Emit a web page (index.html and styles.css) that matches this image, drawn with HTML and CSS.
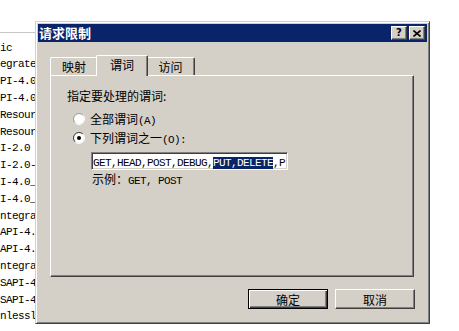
FILE: index.html
```html
<!DOCTYPE html>
<html lang="zh-CN">
  <head>
    <meta charset="UTF-8" />
    <title>请求限制</title>
    <link rel="stylesheet" href="styles.css">
  </head>
  <body>
    <div class="list">
      <div class="list-head"></div>
      <div class="rows">
        <div class="row">ic</div>
        <div class="row">egrate</div>
        <div class="row">PI-4.0</div>
        <div class="row">PI-4.0</div>
        <div class="row">Resour</div>
        <div class="row">Resour</div>
        <div class="row">I-2.0</div>
        <div class="row">I-2.0-</div>
        <div class="row">I-4.0_</div>
        <div class="row">I-4.0_</div>
        <div class="row">ntegrat</div>
        <div class="row">API-4.</div>
        <div class="row">API-4.</div>
        <div class="row">ntegra</div>
        <div class="row">SAPI-4</div>
        <div class="row">SAPI-4</div>
        <div class="row">nlessl</div>
      </div>
    </div>

    <div class="dialog">
      <div class="titlebar">
        <span class="title">请求限制</span>
        <div class="caption-buttons">
          <button class="cap-btn help">?</button>
          <button class="cap-btn">
            <svg width="8" height="7" viewBox="0 0 8 7">
              <path d="M0.5 0.5 L7.5 6.5 M7.5 0.5 L0.5 6.5" stroke="#000" stroke-width="1.6" fill="none" />
            </svg>
          </button>
        </div>
      </div>

      <div class="tabs">
        <div class="tab">映射</div>
        <div class="tab active">谓词</div>
        <div class="tab">访问</div>
      </div>

      <div class="panel">
        <div class="label">指定要处理的谓词:</div>

        <div class="radio-row">
          <svg class="radio" width="12" height="12" viewBox="0 0 12 12">
            <circle cx="6" cy="6" r="5" fill="#fff" />
            <path d="M9.9 2.1 A5.5 5.5 0 0 0 2.1 9.9" stroke="#a0a0a0" fill="none" />
            <path d="M2.1 9.9 A5.5 5.5 0 0 0 9.9 2.1" stroke="#fff" fill="none" />
          </svg>
          <span>全部谓词<span class="ascii">(A)</span></span>
        </div>

        <div class="radio-row">
          <svg class="radio" width="12" height="12" viewBox="0 0 12 12">
            <circle cx="6" cy="6" r="5" fill="#fff" />
            <path d="M9.9 2.1 A5.5 5.5 0 0 0 2.1 9.9" stroke="#404040" fill="none" />
            <path d="M2.1 9.9 A5.5 5.5 0 0 0 9.9 2.1" stroke="#fff" fill="none" />
            <circle cx="6" cy="6" r="2" fill="#000" />
          </svg>
          <span>下列谓词之一<span class="ascii">(O):</span></span>
        </div>

        <div class="field">
          <span class="ascii">GET,HEAD,POST,DEBUG,<span class="selected">PUT,DELETE</span>,P</span>
        </div>

        <div class="hint">示例：<span class="ascii">GET, POST</span></div>
      </div>

      <div class="actions">
        <button class="btn default">确定</button>
        <button class="btn">取消</button>
      </div>
    </div>
  </body>
</html>
```

FILE: styles.css
```css
* {
  margin: 0;
  padding: 0;
  box-sizing: border-box;
}

body {
  width: 459px;
  height: 331px;
  overflow: hidden;
  position: relative;
  background: #fff;
  color: #000;
  font-family: "Noto Sans CJK SC", sans-serif;
  font-size: 12px;
}

.ascii {
  font-family: "Liberation Mono", monospace;
  font-size: 11px;
  letter-spacing: -0.6px;
}

/* background list, scrolled so only the name ends show */
.list {
  width: 46px;
  overflow: hidden;
  padding-top: 32px;
  font-family: "Liberation Mono", monospace;
  font-size: 11px;
  letter-spacing: -0.6px;
}

.list-head {
  height: 1px;
  background: #c8c8c8;
}

.rows {
  padding-top: 6.6px;
}

.row {
  height: 16.8px;
  line-height: 16.8px;
  white-space: nowrap;
}

/* dialog window */
.dialog {
  position: absolute;
  left: 35px;
  top: 21px;
  width: 395px;
  height: 303px;
  background: #d4d0c8;
  border: 1px solid;
  border-color: #d4d0c8 #404040 #404040 #d4d0c8;
  box-shadow: inset 1px 1px #fff, inset -1px -1px #808080;
  padding: 2px;
}

.titlebar {
  display: flex;
  justify-content: space-between;
  align-items: flex-start;
  height: 18px;
  background: #0a246a;
  color: #fff;
}

.title {
  padding-left: 1px;
  font-size: 13px;
  font-weight: bold;
  line-height: 18px;
}

.caption-buttons {
  display: flex;
  gap: 2px;
  margin: 2px 2px 0 0;
}

.cap-btn {
  display: flex;
  align-items: center;
  justify-content: center;
  width: 16px;
  height: 14px;
  background: #d4d0c8;
  border: 1px solid;
  border-color: #fff #404040 #404040 #fff;
  box-shadow: inset -1px -1px #808080;
  font-family: "DejaVu Sans", sans-serif;
  font-size: 10px;
  font-weight: bold;
  line-height: 1;
  color: #000;
}

/* tabs */
.tabs {
  display: flex;
  align-items: flex-end;
  height: 20px;
  margin: 13px 0 0 12px;
  position: relative;
  z-index: 1;
}

.tab {
  width: 48px;
  height: 18px;
  line-height: 17px;
  text-align: center;
  background: #d4d0c8;
  border-top: 1px solid #fff;
  border-left: 1px solid #fff;
  border-right: 1px solid #404040;
  box-shadow: inset -1px 0 #808080;
  border-radius: 2px 2px 0 0;
}

.tab:last-child {
  width: 49px;
}

.tab.active {
  width: 52px;
  height: 21px;
  margin: 0 -2px -1px;
  line-height: 18px;
  position: relative;
  z-index: 2;
}

.panel {
  width: 364px;
  height: 202px;
  margin-left: 12px;
  padding: 12px 0 0 16px;
  border: 1px solid;
  border-color: #fff #404040 #404040 #fff;
  box-shadow: inset -1px -1px #808080;
}

.label {
  line-height: 16px;
}

.radio-row {
  display: flex;
  align-items: center;
  gap: 5px;
  height: 19px;
  margin-left: 6px;
}

.label + .radio-row {
  margin-top: 5px;
}

.field {
  width: 197px;
  height: 18px;
  margin: 5px 0 0 24px;
  padding: 1px 0 0 1px;
  overflow: hidden;
  white-space: nowrap;
  line-height: 14px;
  background: #fff;
  border: 1px solid;
  border-color: #808080 #fff #fff #808080;
  box-shadow: inset 1px 1px #404040, inset -1px -1px #d4d0c8;
}

.selected {
  background: #0a246a;
  color: #fff;
}

.hint {
  margin: 1px 0 0 25px;
  line-height: 16px;
}

/* buttons */
.actions {
  display: flex;
  justify-content: flex-end;
  gap: 7px;
  margin-top: 12px;
  padding-right: 12px;
}

.btn {
  width: 80px;
  height: 20px;
  background: #d4d0c8;
  border: 1px solid;
  border-color: #fff #404040 #404040 #fff;
  box-shadow: inset -1px -1px #808080;
  font-family: "Noto Sans CJK SC", sans-serif;
  font-size: 12px;
  color: #000;
}

.btn.default {
  border: 1px solid #000;
  box-shadow: inset 1px 1px #fff, inset -1px -1px #404040, inset -2px -2px #808080;
}
```
